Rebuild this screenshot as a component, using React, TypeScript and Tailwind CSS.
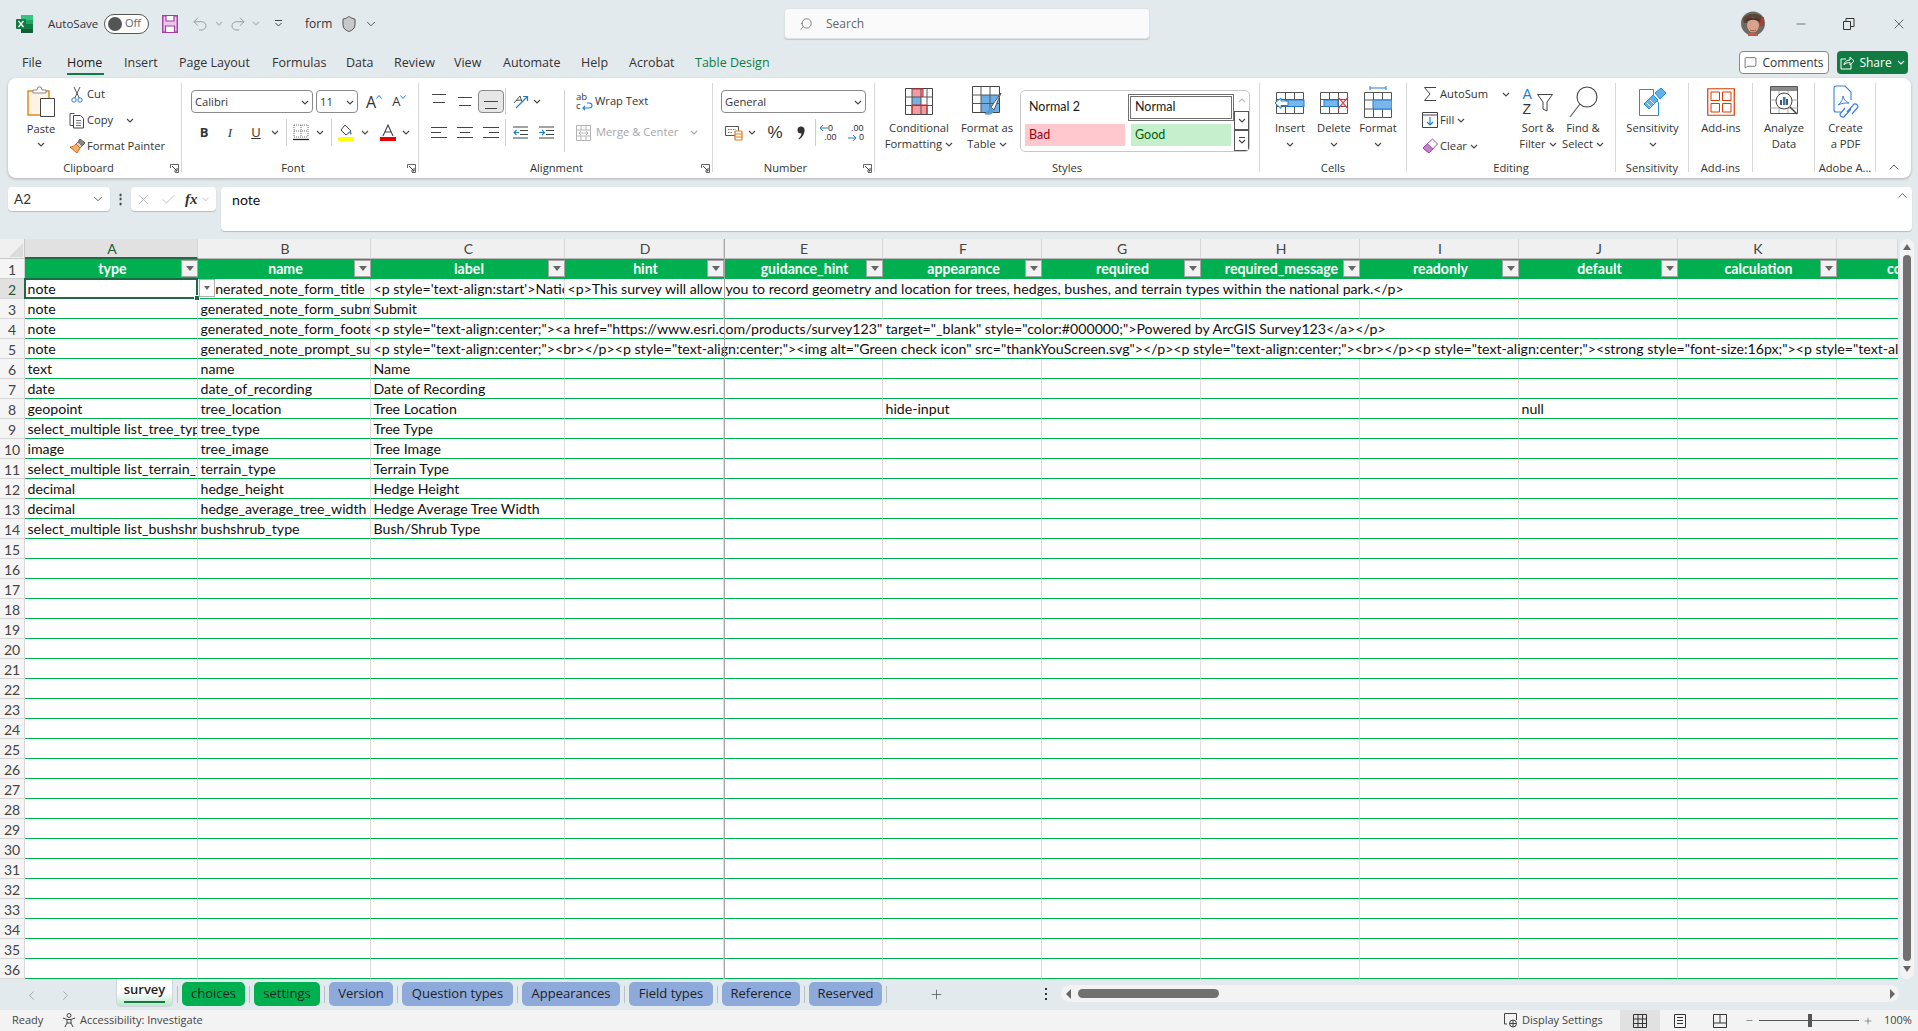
import React from 'react';
import { Search, X, Check, Minus, MessageSquare, Undo2, Redo2, Shield, ChevronDown, ChevronUp, ChevronLeft, ChevronRight, Plus } from 'lucide-react';

const ui = "font-['Open_Sans','Noto_Sans',sans-serif]";

// small dropdown caret used all over the ribbon
const Chev = ({ className = '', color = '#444' }: { className?: string; color?: string }) => (
  <svg width="8" height="5" viewBox="0 0 8 5" fill="none" className={`shrink-0 ${className}`}>
    <path d="M1 1l3 3 3-3" stroke={color} strokeWidth="1.1" />
  </svg>
);

const Ico = ({ w, h, children, className = '' }: { w: number; h: number; children: React.ReactNode; className?: string }) => (
  <svg width={w} height={h} viewBox={`0 0 ${w} ${h}`} fill="none" className={`shrink-0 ${className}`}>
    {children}
  </svg>
);

const Launcher = () => (
  <Ico w={9} h={9} className="absolute right-[2px] top-[6px]">
    <path d="M.5 4V.5H8.500V8.500H5" stroke="#666" />
    <path d="M2 2l5 5M7 4v3H4" stroke="#444" />
  </Ico>
);

const Group = ({ width, label, launcher, last, labelClass = '', children }: { width: string; label?: string; launcher?: boolean; last?: boolean; labelClass?: string; children: React.ReactNode }) => (
  <div className={`${width} h-[89px] shrink-0 flex flex-col ${last ? '' : 'border-r border-[#d8d8d8]'}`}>
    <div className="h-[75px] shrink-0 flex">{children}</div>
    <div className={`relative h-[20px] shrink-0 flex items-center justify-center text-[11.2px] text-[#333] whitespace-nowrap ${labelClass}`}>
      {label}
      {launcher && <Launcher />}
    </div>
  </div>
);

const Large = ({ width, icon, lines, chevLine, noChev }: { width: string; icon: React.ReactNode; lines: string[]; chevLine?: boolean; noChev?: boolean }) => (
  <div className={`${width} shrink-0 flex flex-col items-center text-[11.2px] leading-[16px] text-[#333]`}>
    <div className="h-[37px] flex items-center justify-center">{icon}</div>
    {lines.map((l, i) => (
      <div key={l} className="h-[16px] flex items-center gap-[3px] whitespace-nowrap">
        {l}
        {chevLine && i === lines.length - 1 && <Chev />}
      </div>
    ))}
    {!chevLine && !noChev && lines.length === 1 && (
      <div className="h-[16px] flex items-center">
        <Chev />
      </div>
    )}
  </div>
);

const Small = ({ icon, label, chev }: { icon: React.ReactNode; label: string; chev?: string }) => (
  <div className="h-[22px] flex items-center text-[11.2px] whitespace-nowrap text-[#333]">
    <div className="w-[20px] flex justify-center">{icon}</div>
    <span>{label}</span>
    {chev && <Chev className={chev} />}
  </div>
);

const Sep = ({ className = '' }: { className?: string }) => <div className={`w-px h-[27px] bg-[#d0d0d0] shrink-0 ${className}`} />;

const Lines = ({ rows }: { rows: [number, number][] }) => (
  <Ico w={16} h={13}>
    {rows.map(([x, l], i) => (
      <path key={i} d={`M${x} ${1.5 + i * 5}h${l}`} stroke="#444" />
    ))}
  </Ico>
);

// vertical alignment glyph, two lines at given heights in a 23px tall button
const AlignV = ({ a, b }: { a: number; b: number }) => (
  <Ico w={16} h={23}>
    <path d={`M1 ${a}h14M2 ${b}h12`} stroke="#444" />
  </Ico>
);

const Cell26 = ({ children, className = '' }: { children: React.ReactNode; className?: string }) => (
  <div className={`w-[26px] h-[23px] flex items-center justify-center shrink-0 ${className}`}>{children}</div>
);

// ---- ribbon drawings

const PasteIcon = () => (
  <Ico w={30} h={31}>
    <path d="M2 5h21v24H2z" fill="#fff4e6" stroke="#e08a1e" strokeWidth="1.500" />
    <path d="M7 7V4h4l1-3h3l1 3h4v3z" fill="#fff" stroke="#8a8a8a" />
    <path d="M14.500 12.500h14v18h-14z" fill="#fff" stroke="#444" />
  </Ico>
);
const ScissorIcon = () => (
  <Ico w={12} h={17}>
    <circle cx="3" cy="14" r="2.200" stroke="#2b7cd3" />
    <circle cx="9" cy="14" r="2.200" stroke="#2b7cd3" />
    <path d="M3.800 12L9 1M8.200 12L3 1" stroke="#555" />
  </Ico>
);
const CopyIcon = () => (
  <Ico w={16} h={17}>
    <path d="M5.500 1.500H1v12h3" stroke="#555" />
    <path d="M4.500 3.500h7l3 3v9.500h-10z" fill="#fff" stroke="#444" />
    <path d="M7 8.500h5M7 11h5M7 13.500h5" stroke="#777" />
  </Ico>
);
const PainterIcon = () => (
  <Ico w={17} h={16}>
    <path d="M11 1l5 4-3 3-4-4z" fill="#888" stroke="#555" />
    <path d="M9 4l4 4-2 2-4-4z" fill="#d6d6d6" stroke="#777" />
    <path d="M7 6l4 4-3 5-7-6c3 0 4-1 6-3z" fill="#f3b071" stroke="#d2691e" />
  </Ico>
);
const BorderIcon = () => (
  <Ico w={16} h={17}>
    <path d="M1 1h14M1 7h14M1 13h14M1 1v12M8 1v12M15 1v12" stroke="#777" strokeDasharray="1 1" />
    <path d="M0 15.500h16" stroke="#222" strokeWidth="1.300" />
  </Ico>
);
const FillIcon = () => (
  <Ico w={16} h={17}>
    <path d="M7 1l6 6-5 4-5-5z" fill="#fff" stroke="#444" />
    <path d="M12 6c1 2 2 3 1.500 4s-2 .5-1.500-1z" fill="#2d7fd3" />
    <rect y="13" width="16" height="4" fill="#ffff00" />
  </Ico>
);
const FontColorIcon = () => (
  <Ico w={16} h={17}>
    <path d="M3 12L8 1l5 11M5 8h6" stroke="#444" strokeWidth="1.100" />
    <rect y="13" width="16" height="4" fill="#f00000" />
  </Ico>
);
const OrientIcon = () => (
  <Ico w={17} h={16}>
    <path d="M1 9l6-7 2 6M3 6.500l5-.5" stroke="#555" />
    <path d="M3 14L14 3M10 2.500h4.500V7" stroke="#1f7fcf" strokeWidth="1.200" />
  </Ico>
);
const IndentL = () => (
  <Ico w={15} h={13}>
    <path d="M0 1h15M7 4.500h8M7 8.500h8M0 12h15" stroke="#444" />
    <path d="M6 6.500H1M3.500 4L1 6.500 3.500 9" stroke="#1f7fcf" strokeWidth="1.100" />
  </Ico>
);
const IndentR = () => (
  <Ico w={15} h={13}>
    <path d="M0 1h15M7 4.500h8M7 8.500h8M0 12h15" stroke="#444" />
    <path d="M0 6.500h5M3 4l2.500 2.500L3 9" stroke="#1f7fcf" strokeWidth="1.100" />
  </Ico>
);
const WrapIcon = () => (
  <div className="relative w-[18px] h-[20px] shrink-0 text-[9.500px] leading-[10px] text-[#333]">
    <span className="absolute left-0 top-0">ab</span>
    <span className="absolute left-0 top-[9px]">c</span>
    <svg width="12" height="10" viewBox="0 0 12 10" fill="none" className="absolute left-[6px] top-[9px]">
      <path d="M1 7h6c4 0 4-5 0-5H5M3 5L1 7l2 2" stroke="#1f7fcf" strokeWidth="1.100" />
    </svg>
  </div>
);
const MergeIcon = () => (
  <Ico w={15} h={16}>
    <path d="M.5.5h14v15H.5zM.5 5h14M.5 11h14M5 .5V5M10 .5V5M5 11v4.500M10 11v4.500" stroke="#b5b5b5" />
    <path d="M3 8h9M5 6L3 8l2 2M10 6l2 2-2 2" stroke="#b5b5b5" />
  </Ico>
);
const AccountingIcon = () => (
  <Ico w={18} h={17}>
    <path d="M.5 2.500h13v9H.5z" fill="#fff" stroke="#555" />
    <path d="M3 5.500h8M3 8.500h5" stroke="#777" strokeDasharray="1.500 1" />
    <rect x="10" y="7" width="7" height="9" rx="1" fill="#fff" stroke="#e07b1a" strokeWidth="1.200" />
    <path d="M10 10h7M10 13h7" stroke="#e07b1a" />
  </Ico>
);
const CommaIcon = () => (
  <Ico w={10} h={14}>
    <circle cx="5" cy="4" r="3.500" fill="#333" />
    <path d="M8.500 4c0 4-2 7.500-5.500 9.500l-.6-.8C4.500 11 5.500 9 5.500 7z" fill="#333" />
  </Ico>
);
const DecIcon = ({ more }: { more?: boolean }) => (
  <div className="relative w-[18px] h-[20px] shrink-0 font-['Liberation_Sans',sans-serif] text-[9px] leading-[9px] text-[#333]">
    <span className={`absolute top-[1px] ${more ? 'left-[3px]' : 'left-[9px]'}`}>{more ? '.00' : '0'}</span>
    <span className={`absolute top-[10px] ${more ? 'left-[11px]' : 'left-[5px]'}`}>{more ? '0' : '.00'}</span>
    <svg width="9" height="8" viewBox="0 0 9 8" fill="none" className={`absolute ${more ? 'left-0 top-[11px]' : 'left-0 top-[1px]'}`}>
      {more ? <path d="M0 4h8M5 1l3 3-3 3" stroke="#1f7fcf" /> : <path d="M9 4H1M4 1L1 4l3 3" stroke="#1f7fcf" />}
    </svg>
  </div>
);
const CondIcon = () => (
  <Ico w={28} h={27}>
    <path d="M.5 .5h27v26H.5z" fill="#fff" stroke="#444" />
    <rect x="7" y="1" width="11" height="8" fill="#f59aa0" />
    <rect x="7" y="9" width="9" height="8" fill="#73b2e6" />
    <rect x="7" y="17" width="15" height="9" fill="#f59aa0" />
    <path d="M7 .5v26M16 .5v26M22 .5v26M.5 9h27M.5 17.500h27" stroke="#555" />
    <path d="M7 1h11v8M7 26V17h15v9" stroke="#d3222a" />
  </Ico>
);
const TableIcon = () => (
  <Ico w={30} h={32}>
    <path d="M.5 .5h27v26H.5z" fill="#fff" stroke="#444" />
    <rect x="9" y="9" width="18" height="17" fill="#6eaee6" />
    <path d="M9 .5v26M18 .5v26M.5 9h27M.5 17.500h27" stroke="#555" />
    <path d="M29 7L19 21l3 3z" fill="#fff" stroke="#555" />
    <path d="M19 21c-3 1-2 4-7 7 5 2 10 0 10-4z" fill="#5b9bd5" />
  </Ico>
);
const CellsBase = ({ children }: { children: React.ReactNode }) => (
  <Ico w={30} h={27}>
    <path d="M1.500 4.500h27v21h-27zM1.500 11.500h27M1.500 18.500h27M10.500 4.500v21M19.500 4.500v21" stroke="#555" />
    {children}
  </Ico>
);
const InsertIcon = () => (
  <CellsBase>
    <rect x="10" y="12" width="19" height="6.500" fill="#7ab6ea" stroke="#1f7fcf" />
    <path d="M0 15l6-5v3h7v4.500H6v3z" fill="#fff" stroke="#1f7fcf" />
  </CellsBase>
);
const DeleteIcon = () => (
  <CellsBase>
    <rect x="5" y="12" width="14" height="6.500" fill="#7ab6ea" stroke="#1f7fcf" />
    <path d="M19 9l10 12M29 9L19 21" stroke="#e8474c" strokeWidth="1.200" />
  </CellsBase>
);
const FormatIcon = () => (
  <Ico w={28} h={32}>
    <path d="M6 2h16M6 0v4M22 0v4" stroke="#1f7fcf" />
    <path d="M.5 6.500h27v25H.500zM.5 14h27M.5 23h27M9.500 6.500v25M18.500 6.500v25" stroke="#555" />
    <rect x="9" y="14" width="19" height="9" fill="#7ab6ea" />
    <path d="M9 14h19v9H9z" stroke="#1f7fcf" />
  </Ico>
);
const FillDownIcon = () => (
  <Ico w={16} h={16}>
    <path d="M.5 .5h15v15H.5zM.5 3h15" fill="#fff" stroke="#444" />
    <path d="M8 5v8M5 10l3 3 3-3" stroke="#1f7fcf" strokeWidth="1.200" />
  </Ico>
);
const ClearIcon = () => (
  <Ico w={16} h={16}>
    <path d="M10.500 1l5 5L7 15l-6-5z" fill="#fff" stroke="#a347b0" />
    <path d="M5.500 6l5.500 5-4 4-6-5z" fill="#c77fd0" stroke="#a347b0" />
  </Ico>
);
const SortIcon = () => (
  <div className="relative w-[31px] h-[30px] font-['Liberation_Sans',sans-serif] text-[14px] leading-[14px]">
    <span className="absolute left-0 top-0 text-[#1f7fcf]">A</span>
    <span className="absolute left-0 top-[15px] text-[#333]">Z</span>
    <svg width="16" height="18" viewBox="0 0 16 18" fill="none" className="absolute left-[14px] top-[7px]">
      <path d="M.5.500h15L10 8v9l-4-2V8z" fill="#fff" stroke="#444" />
    </svg>
  </div>
);
const FindIcon = () => (
  <Ico w={29} h={32}>
    <circle cx="18" cy="11" r="10" fill="#fff" stroke="#444" strokeWidth="1.100" />
    <path d="M11 18L1 31" stroke="#555" strokeWidth="1.100" />
  </Ico>
);
const SensitivityIcon = () => (
  <Ico w={28} h={29}>
    <path d="M.5 2.500h14v8l5 5v13H.5z" fill="#fff" stroke="#1f8fdc" />
    <path d="M5 17l9-9 5 5-9 9z" fill="#5fb2ea" stroke="#1f8fdc" />
    <path d="M16 6l6-5 5 5-6 6z" fill="#5fb2ea" stroke="#1f8fdc" />
    <path d="M8 16l5 5M11 13l5 5" stroke="#fff" />
  </Ico>
);
const AddInsIcon = () => (
  <Ico w={28} h={28}>
    <path d="M.75.75h26.500v26.500H.75z" stroke="#d83b01" strokeWidth="1.200" />
    <path d="M4 4h8.500v8.500H4zM15.500 4H24v8.500h-8.500zM4 15.500h8.500V24H4zM15.500 15.500H24V24h-8.500z" stroke="#d83b01" />
  </Ico>
);
const AnalyzeIcon = () => (
  <Ico w={28} h={32}>
    <path d="M.5.5h27v27H.5z" fill="#fff" stroke="#555" />
    <rect x="1" y="1" width="26" height="4" fill="#8a8a8a" />
    <path d="M9 5v22M18 5v22M.5 14h27M.5 22h27" stroke="#aaa" />
    <circle cx="14" cy="15" r="8" fill="#fff" stroke="#444" />
    <rect x="10" y="14" width="2" height="5" fill="#555" />
    <rect x="13" y="11" width="2.500" height="8" fill="#1f7fcf" />
    <rect x="16" y="13" width="2" height="6" fill="#555" />
    <path d="M20 21l7 7" stroke="#444" strokeWidth="1.400" />
  </Ico>
);
const PdfIcon = () => (
  <Ico w={26} h={34}>
    <path d="M1 3a2 2 0 012-2h9l6 6v8M1 3v22a2 2 0 002 2h5" stroke="#3a7fe0" strokeWidth="1.100" />
    <path d="M5 20c3-2 5-6 5-9 1 4 3 6 6 7-4 0-7 0-11 2z" stroke="#3a7fe0" />
    <path d="M14 27l7-8a3 3 0 014 3l-6 7M18 24l-7 8a3 3 0 01-4-3l5-6" stroke="#3a7fe0" strokeWidth="1.200" />
  </Ico>
);
const ShareIcon = () => (
  <Ico w={14} h={14}>
    <path d="M6 3H1v10h10V8" stroke="#fff" />
    <path d="M4 9c0-3 3-5 6-5V1l4 4-4 4V6.500C8 6.500 5 7 4 9z" stroke="#fff" />
  </Ico>
);
const Avatar = () => (
  <Ico w={24} h={25}>
    <circle cx="12" cy="12.500" r="12" fill="#6a6a62" />
    <path d="M2 8c3-6 17-7 20 0l-1 4H3z" fill="#5c4237" />
    <path d="M20 6h3v9h-4z" fill="#b43a30" />
    <ellipse cx="12" cy="14" rx="6" ry="7.500" fill="#d9a28a" />
    <path d="M6 10c2-3 10-3 12 0" stroke="#4a3228" strokeWidth="2" />
    <path d="M9 19c2 1 4 1 6 0" stroke="#a0503c" />
    <path d="M7 23c2-2 8-2 10 0v2H7z" fill="#c9584a" />
  </Ico>
);
const ExcelLogo = () => (
  <Ico w={17} h={18}>
    <path d="M5 0h11a1 1 0 011 1v16a1 1 0 01-1 1H5z" fill="#21a366" />
    <path d="M5 0h12v5H5z" fill="#33c481" />
    <path d="M5 9h12v5H5z" fill="#107c41" />
    <path d="M5 14h12v3a1 1 0 01-1 1H5z" fill="#185c37" />
    <rect x="0" y="4" width="10" height="10" rx="1" fill="#107c41" />
    <path d="M2.500 6l5 6M7.500 6l-5 6" stroke="#fff" strokeWidth="1.300" />
  </Ico>
);
const SaveIcon = () => (
  <Ico w={16} h={18}>
    <path d="M.75.75h14.500v16.500H.75z" fill="#edc6ed" stroke="#a33ea1" strokeWidth="1.400" />
    <path d="M4 1v5h8V1M3.500 17v-6h9v6" stroke="#a33ea1" strokeWidth="1.200" fill="#fff" />
  </Ico>
);

// ---- sheet data

const colLetters = ['A', 'B', 'C', 'D', 'E', 'F', 'G', 'H', 'I', 'J', 'K', ''];
const headers = ['type', 'name', 'label', 'hint', 'guidance_hint', 'appearance', 'required', 'required_message', 'readonly', 'default', 'calculation'];
const colSpanClass: Record<number, string> = { 1: 'col-span-1', 6: 'col-span-6', 7: 'col-span-7', 10: 'col-span-10' };

type C = { t?: string; span?: number };
const rowData: C[][] = [
  [{ t: 'note' }, { t: 'generated_note_form_title' }, { t: "<p style='text-align:start'>National Park Survey</p>" }, { t: '<p>This survey will allow you to record geometry and location for trees, hedges, bushes, and terrain types within the national park.</p>', span: 6 }, {}, {}, {}],
  [{ t: 'note' }, { t: 'generated_note_form_submit' }, { t: 'Submit' }, {}, {}, {}, {}, {}, {}, {}, {}, {}],
  [{ t: 'note' }, { t: 'generated_note_form_footer' }, { t: '<p style="text-align:center;"><a href="https://www.esri.com/products/survey123" target="_blank" style="color:#000000;">Powered by ArcGIS Survey123</a></p>', span: 7 }, {}, {}, {}],
  [{ t: 'note' }, { t: 'generated_note_prompt_submit' }, { t: '<p style="text-align:center;"><br></p><p style="text-align:center;"><img alt="Green check icon" src="thankYouScreen.svg"></p><p style="text-align:center;"><br></p><p style="text-align:center;"><strong style="font-size:16px;"><p style="text-align:center;">Thanks</p></strong></p>', span: 10 }],
  [{ t: 'text' }, { t: 'name' }, { t: 'Name' }, {}, {}, {}, {}, {}, {}, {}, {}, {}],
  [{ t: 'date' }, { t: 'date_of_recording' }, { t: 'Date of Recording' }, {}, {}, {}, {}, {}, {}, {}, {}, {}],
  [{ t: 'geopoint' }, { t: 'tree_location' }, { t: 'Tree Location' }, {}, {}, { t: 'hide-input' }, {}, {}, {}, { t: 'null' }, {}, {}],
  [{ t: 'select_multiple list_tree_type' }, { t: 'tree_type' }, { t: 'Tree Type' }, {}, {}, {}, {}, {}, {}, {}, {}, {}],
  [{ t: 'image' }, { t: 'tree_image' }, { t: 'Tree Image' }, {}, {}, {}, {}, {}, {}, {}, {}, {}],
  [{ t: 'select_multiple list_terrain_type' }, { t: 'terrain_type' }, { t: 'Terrain Type' }, {}, {}, {}, {}, {}, {}, {}, {}, {}],
  [{ t: 'decimal' }, { t: 'hedge_height' }, { t: 'Hedge Height' }, {}, {}, {}, {}, {}, {}, {}, {}, {}],
  [{ t: 'decimal' }, { t: 'hedge_average_tree_width' }, { t: 'Hedge Average Tree Width' }, {}, {}, {}, {}, {}, {}, {}, {}, {}],
  [{ t: 'select_multiple list_bushshrub_type' }, { t: 'bushshrub_type' }, { t: 'Bush/Shrub Type' }, {}, {}, {}, {}, {}, {}, {}, {}, {}],
];
const allRows: C[][] = [...rowData, ...Array.from({ length: 22 }, () => Array.from({ length: 12 }, () => ({} as C)))];

const menuTabs = [
  ['File', 'w-[45px]'], ['Home', 'w-[57px]'], ['Insert', 'w-[55px]'], ['Page Layout', 'w-[93px]'], ['Formulas', 'w-[74px]'], ['Data', 'w-[48px]'],
  ['Review', 'w-[60px]'], ['View', 'w-[49px]'], ['Automate', 'w-[78px]'], ['Help', 'w-[48px]'], ['Acrobat', 'w-[66px]'], ['Table Design', 'w-[90px]'],
];

const sheetTabs = [
  ['choices', 'w-[63px]', 'bg-[#00b050]'], ['settings', 'w-[66px]', 'bg-[#00b050]'], ['Version', 'w-[64px]', 'bg-[#8eaadb]'], ['Question types', 'w-[111px]', 'bg-[#8eaadb]'],
  ['Appearances', 'w-[98px]', 'bg-[#8eaadb]'], ['Field types', 'w-[84px]', 'bg-[#8eaadb]'], ['Reference', 'w-[78px]', 'bg-[#8eaadb]'], ['Reserved', 'w-[73px]', 'bg-[#8eaadb]'],
];

const FilterBtn = () => (
  <div className="absolute right-0 top-[1px] w-[17px] h-[17px] bg-[#f2f2f2] border border-[#a6a6a6] flex items-center justify-center">
    <div className="w-0 h-0 border-l-[4px] border-r-[4px] border-t-[5px] border-l-transparent border-r-transparent border-t-[#666]" />
  </div>
);

const Sheet = () => (
  <div className="relative grid grid-cols-[25px_173px_173px_194px_159px_159px_159px_159px_159px_159px_159px_159px_61px] auto-rows-[20px] w-[1898px] bg-white font-['Lato',sans-serif] text-[14.15px] text-[#111]">
    {/* corner + column letters */}
    <div className="bg-[#f0f0f0] border-b border-r border-[#c8c8c8] relative overflow-hidden">
      <div className="absolute right-[1px] bottom-[1px] w-0 h-0 border-l-[14px] border-b-[14px] border-l-transparent border-b-[#dcdcdc]" />
    </div>
    {colLetters.map((l, i) => (
      <div key={i} className={`flex items-center justify-center pl-[2px] text-[14px] border-r border-[#d6d6d6] ${i === 0 ? 'bg-[#e1e1e1] border-b-2 border-b-[#1d6b42] text-[#1d5c38]' : 'bg-[#f0f0f0] border-b border-b-[#b8b8b8] text-[#444]'}`}>
        {l}
      </div>
    ))}

    {/* row 1, table header */}
    <div className="bg-[#f5f5f5] border-b border-r border-[#d0d0d0] flex items-center justify-center pt-[1px] text-[14px] text-[#444]">1</div>
    {headers.map((h) => (
      <div key={h} className="relative bg-[#00b050] flex items-center justify-center pl-[2px] font-bold text-white whitespace-nowrap overflow-hidden">
        {h}
        <FilterBtn />
      </div>
    ))}
    <div className="bg-[#00b050] font-bold text-white whitespace-nowrap overflow-hidden flex items-center pl-[50px]">constraint</div>

    {allRows.map((cells, r) => (
      <React.Fragment key={r}>
        <div className={`border-b border-r border-[#d8d8d8] flex items-center justify-center pt-[1px] text-[14px] ${r === 0 ? 'bg-[#e1e1e1] text-[#1d5c38]' : 'bg-[#f5f5f5] text-[#444]'}`}>{r + 2}</div>
        {cells.map((c, i) => (
          <div
            key={i}
            className={`border-b border-b-[#00b050] flex items-center px-[2.500px] pt-[1px] whitespace-nowrap ${colSpanClass[c.span ?? 1]} ${i < cells.length - 1 ? 'border-r border-r-[#dcdcdc]' : ''} ${r === 0 && i === 0 ? 'relative z-10' : 'overflow-hidden'}`}
          >
            {c.t}
            {r === 0 && i === 0 && (
              <>
                <div className="absolute -left-px -top-px -right-px -bottom-px border-2 border-[#1d6b42]" />
                <div className="absolute -right-[3px] -bottom-[3px] w-[6px] h-[6px] bg-[#1d6b42] border border-white" />
                <div className="absolute left-full top-0 ml-[2px] w-[16px] h-[18px] bg-[#fdfdfd] border border-[#b0b0b0] flex items-center justify-center">
                  <div className="w-0 h-0 border-l-[3.500px] border-r-[3.500px] border-t-[4px] border-l-transparent border-r-transparent border-t-[#666]" />
                </div>
              </>
            )}
          </div>
        ))}
      </React.Fragment>
    ))}

    {/* freeze pane line */}
    <div className="absolute left-[724px] top-0 bottom-0 w-px bg-[#a8a8a8]" />
  </div>
);

const App = () => (
  <div className={`w-[1918px] h-[1031px] overflow-hidden flex flex-col bg-[#e3eaee] text-[#333] ${ui}`}>
    {/* title bar */}
    <div className="h-[47px] shrink-0 flex items-center text-[12px]">
      <div className="ml-[16px]"><ExcelLogo /></div>
      <span className="ml-[15px] w-[56px] text-[11.500px]">AutoSave</span>
      <div className="w-[45px] h-[20px] rounded-full border border-[#555] bg-white flex items-center pl-[3px] gap-[3px] text-[11px] text-[#666]">
        <div className="w-[14px] h-[14px] rounded-full bg-[#555]" />
        Off
      </div>
      <div className="ml-[13px]"><SaveIcon /></div>
      <Undo2 size={18} strokeWidth={1.3} color="#9a9a9a" className="ml-[13px]" />
      <Chev className="ml-[6px]" color="#b5b5b5" />
      <Redo2 size={18} strokeWidth={1.3} color="#9a9a9a" className="ml-[6px]" />
      <Chev className="ml-[5px]" color="#b5b5b5" />
      <Ico w={9} h={8} className="ml-[14px]"><path d="M1 .5h7M1.500 3l3 3 3-3" stroke="#444" /></Ico>
      <span className="ml-[22px] w-[35px] text-[12px]">form</span>
      <Shield size={18} strokeWidth={1.2} color="#444" fill="#c8c8c8" />
      <ChevronDown size={14} strokeWidth={1.4} className="ml-[6px]" color="#333" />
      <div className="ml-[406px] w-[366px] h-[31px] rounded-[4px] bg-[#fafafa] border border-[#dde2e5] shadow-[0_1px_1px_rgba(0,0,0,0.15)] flex items-center pl-[14px] gap-[13px] text-[12px] text-[#666]">
        <Search size={14} strokeWidth={1.2} color="#555" className="-scale-x-100" />
        Search
      </div>
      <div className="ml-[591px]"><Avatar /></div>
      <Minus size={14} strokeWidth={1.1} color="#333" className="ml-[29px]" />
      <Ico w={12} h={12} className="ml-[35px]"><path d="M.5 3.500h7v8h-7zM3 3.500V.5h8v8H7.500" stroke="#333" /></Ico>
      <X size={16} strokeWidth={1.1} color="#333" className="ml-[36px]" />
    </div>

    {/* menu tabs */}
    <div className="h-[31px] shrink-0 flex items-center pl-[22px] text-[12.5px] text-[#333]">
      {menuTabs.map(([name, w]) => (
        <div key={name} className={`${w} relative shrink-0 whitespace-nowrap pt-[2px] ${name === 'Table Design' ? 'text-[#107c41]' : ''} ${name === 'Home' ? 'text-[#222]' : ''}`}>
          {name}
          {name === 'Home' && <div className="absolute left-0 -bottom-[2px] w-[37px] h-[2px] bg-[#107c41]" />}
        </div>
      ))}
      <div className="ml-auto flex items-center mr-[10px] gap-[8px]">
        <div className="w-[90px] h-[23px] bg-white border border-[#888] rounded-[4px] flex items-center justify-center gap-[5px] text-[12px]">
          <MessageSquare size={13} strokeWidth={1.2} />
          Comments
        </div>
        <div className="w-[71px] h-[23px] bg-[#107c41] rounded-[4px] flex items-center justify-center gap-[5px] text-[12px] text-white">
          <ShareIcon />
          Share
          <Chev color="#fff" />
        </div>
      </div>
    </div>

    {/* ribbon */}
    <div className="h-[100px] shrink-0 ml-[8px] w-[1903px] rounded-[8px] bg-white shadow-[0_1px_3px_rgba(0,0,0,0.25)] flex pt-[5px] relative">
      <Group width="w-[174px]" label="Clipboard" launcher labelClass="pr-[12px]">
        <div className="w-[53px] pl-[13px] shrink-0 flex flex-col items-center text-[11.2px] pt-[3px]">
          <PasteIcon />
          <div className="mt-[4px] leading-[16px]">Paste</div>
          <Chev className="mt-[5px]" />
        </div>
        <div className="flex flex-col gap-[4px] ml-[6px]">
          <Small icon={<ScissorIcon />} label="Cut" />
          <Small icon={<CopyIcon />} label="Copy" chev="ml-[13px]" />
          <Small icon={<PainterIcon />} label="Format Painter" />
        </div>
      </Group>

      <Group width="w-[237px]" label="Font" launcher labelClass="pr-[14px]">
        <div className="pl-[9px] pt-[7px] flex flex-col gap-[8px]">
          <div className="flex items-center h-[23px]">
            <div className="w-[122px] h-[23px] border border-[#8a8a8a] rounded-[4px] flex items-center justify-between px-[3px] pt-[1px] text-[11.2px]">
              Calibri
              <Chev />
            </div>
            <div className="w-[42px] h-[23px] ml-[3px] border border-[#8a8a8a] rounded-[4px] flex items-center justify-between px-[3px] pt-[1px] text-[11.2px]">
              11
              <Chev />
            </div>
            <span className="ml-[8px] text-[16px] leading-[16px]">A</span>
            <Ico w={6} h={4} className="-mt-[10px]"><path d="M.5 3.500l2.500-3 2.500 3" stroke="#1f7fcf" /></Ico>
            <span className="ml-[10px] text-[13px] leading-[13px]">A</span>
            <Ico w={6} h={4} className="-mt-[10px]"><path d="M.5.5l2.500 3 2.500-3" stroke="#1f7fcf" /></Ico>
          </div>
          <div className="flex items-center h-[23px]">
            <Cell26><span className="font-bold text-[13px]">B</span></Cell26>
            <Cell26><span className="italic text-[13px] font-['Liberation_Serif',serif]">I</span></Cell26>
            <Cell26><span className="underline text-[13px]">U</span></Cell26>
            <Chev className="ml-[2px]" />
            <Sep className="ml-[7px]" />
            <div className="ml-[6px]"><BorderIcon /></div>
            <Chev className="ml-[7px]" />
            <Sep className="ml-[7px]" />
            <div className="ml-[6px]"><FillIcon /></div>
            <Chev className="ml-[7px]" />
            <div className="ml-[11px]"><FontColorIcon /></div>
            <Chev className="ml-[6px]" />
          </div>
        </div>
      </Group>

      <Group width="w-[294px]" label="Alignment" launcher labelClass="pr-[18px]">
        <div className="pl-[7px] pt-[7px] flex">
          <div className="w-[138px] flex flex-col gap-[8px]">
            <div className="flex items-center h-[23px]">
              <Cell26><AlignV a={4.5} b={12.5} /></Cell26>
              <Cell26><AlignV a={7.5} b={15.5} /></Cell26>
              <Cell26 className="bg-[#e6e6e6] border border-[#8a8a8a] rounded-[4px]"><AlignV a={11.5} b={18.5} /></Cell26>
              <Sep className="ml-[1px]" />
              <div className="ml-[7px]"><OrientIcon /></div>
              <Chev className="ml-[3px]" />
            </div>
            <div className="flex items-center h-[23px]">
              <Cell26><Lines rows={[[0, 16], [0, 10], [0, 16]]} /></Cell26>
              <Cell26><Lines rows={[[0, 16], [3, 10], [0, 16]]} /></Cell26>
              <Cell26><Lines rows={[[0, 16], [6, 10], [0, 16]]} /></Cell26>
              <Sep className="ml-[1px]" />
              <Cell26 className="ml-[1px]"><IndentL /></Cell26>
              <Cell26><IndentR /></Cell26>
            </div>
          </div>
          <div className="w-px h-[62px] bg-[#d0d0d0]" />
          <div className="pl-[11px] flex flex-col gap-[8px]">
            <div className="h-[23px] flex items-center gap-[1px] text-[11.2px]"><WrapIcon /><span>Wrap Text</span></div>
            <div className="h-[23px] flex items-center text-[11.2px] text-[#a6a6a6]">
              <MergeIcon />
              <span className="ml-[5px]">Merge &amp; Center</span>
              <Chev className="ml-[12px]" color="#a6a6a6" />
            </div>
          </div>
        </div>
      </Group>

      <Group width="w-[162px]" label="Number" launcher labelClass="pr-[16px]">
        <div className="pl-[8px] pt-[7px] flex flex-col gap-[8px]">
          <div className="w-[145px] h-[23px] border border-[#8a8a8a] rounded-[4px] flex items-center justify-between px-[3px] pt-[1px] text-[11.2px]">
            General
            <Chev />
          </div>
          <div className="h-[23px] flex items-center">
            <div className="ml-[4px]"><AccountingIcon /></div>
            <Chev className="ml-[5px]" />
            <span className="ml-[7px] w-[24px] text-[17px] leading-[17px] text-center font-['Liberation_Sans',sans-serif]">%</span>
            <div className="ml-[5px] w-[18px] flex justify-center"><CommaIcon /></div>
            <Sep className="ml-[5px]" />
            <div className="ml-[3px]"><DecIcon /></div>
            <div className="ml-[11px]"><DecIcon more /></div>
          </div>
        </div>
      </Group>

      <Group width="w-[385px]" label="Styles">
        <div className="pl-[9px] flex">
          <Large width="w-[70px]" icon={<CondIcon />} lines={['Conditional', 'Formatting']} chevLine />
          <Large width="w-[66px]" icon={<TableIcon />} lines={['Format as', 'Table']} chevLine />
          <div className="mt-[7px] w-[230px] h-[62px] border border-[#c8c8c8] rounded-[5px] flex text-[12.500px] overflow-hidden">
            <div className="w-[214px] pl-[4px] pt-[3px] grid grid-cols-[100px_100px] grid-rows-[27px_22px] gap-x-[6px] gap-y-[3px] font-['Lato',sans-serif]">
              <div className="flex items-center pl-[4px] text-[#1a1a1a]">Normal 2</div>
              <div className="-mx-[3px] border-[3px] border-double border-[#707070] flex items-center pl-[4px] text-[#1a1a1a]">Normal</div>
              <div className="bg-[#ffc7ce] text-[#9c0006] flex items-center pl-[4px]">Bad</div>
              <div className="bg-[#c6efce] text-[#006100] flex items-center pl-[4px]">Good</div>
            </div>
            <div className="w-[15px] ml-auto flex flex-col">
              <div className="h-[20px] flex items-center justify-center"><Chev color="#bbb" className="rotate-180" /></div>
              <div className="h-[20px] border border-[#555] flex items-center justify-center"><Chev /></div>
              <div className="h-[21px] border border-[#555] flex flex-col items-center justify-center gap-[1px]"><div className="w-[6px] h-px bg-[#444]" /><Chev /></div>
            </div>
          </div>
        </div>
      </Group>

      <Group width="w-[147px]" label="Cells">
        <div className="pl-[8px] flex">
          <Large width="w-[44px]" icon={<InsertIcon />} lines={['Insert']} />
          <Large width="w-[44px]" icon={<DeleteIcon />} lines={['Delete']} />
          <Large width="w-[44px]" icon={<FormatIcon />} lines={['Format']} />
        </div>
      </Group>

      <Group width="w-[209px]" label="Editing">
        <div className="pl-[13px] flex">
          <div className="w-[96px] flex flex-col gap-[4px]">
            <Small icon={<Ico w={14} h={16}><path d="M13 1.500H1.500L7 8l-5.500 6.500H13" stroke="#444" /></Ico>} label="AutoSum" chev="ml-[14px]" />
            <Small icon={<FillDownIcon />} label="Fill" chev="ml-[3px]" />
            <Small icon={<ClearIcon />} label="Clear" chev="ml-[3px]" />
          </div>
          <Large width="w-[44px]" icon={<SortIcon />} lines={['Sort &', 'Filter']} chevLine />
          <Large width="w-[46px]" icon={<FindIcon />} lines={['Find &', 'Select']} chevLine />
        </div>
      </Group>

      <Group width="w-[73px]" label="Sensitivity">
        <Large width="w-[73px]" icon={<SensitivityIcon />} lines={['Sensitivity']} />
      </Group>
      <Group width="w-[64px]" label="Add-ins">
        <Large width="w-[64px]" icon={<AddInsIcon />} lines={['Add-ins']} noChev />
      </Group>
      <Group width="w-[62px]">
        <Large width="w-[62px]" icon={<AnalyzeIcon />} lines={['Analyze', 'Data']} />
      </Group>
      <Group width="w-[61px]" label="Adobe A...">
        <Large width="w-[61px]" icon={<PdfIcon />} lines={['Create', 'a PDF']} />
      </Group>
      <ChevronUp size={16} strokeWidth={1.2} color="#333" className="absolute right-[9px] bottom-[3px]" />
    </div>

    {/* formula bar */}
    <div className="h-[44px] shrink-0 mt-[9px] ml-[8px] flex items-start text-[12.500px]">
      <div className="w-[102px] h-[24px] bg-white rounded-[4px] shadow-[0_1px_1px_rgba(0,0,0,0.2)] flex items-center justify-between pl-[6px] pr-[5px] font-['Lato',sans-serif] text-[13.500px]">
        A2
        <ChevronDown size={14} strokeWidth={1.3} />
      </div>
      <div className="w-[21px] h-[24px] flex items-center justify-center text-[#444] font-bold">⋮</div>
      <div className="w-[85px] h-[24px] bg-white rounded-[4px] shadow-[0_1px_1px_rgba(0,0,0,0.2)] flex items-center pl-[4px] gap-[8px]">
        <X size={17} strokeWidth={1} color="#aaa" />
        <Check size={17} strokeWidth={1} color="#aaa" />
        <span className="italic font-bold text-[15px] leading-[15px] font-['Liberation_Serif',serif] text-[#333]">fx</span>
        <ChevronDown size={11} strokeWidth={1.3} color="#999" className="-ml-[6px]" />
      </div>
      <div className="relative ml-[5px] w-[1691px] h-[44px] bg-white rounded-[4px] shadow-[0_1px_1px_rgba(0,0,0,0.2)] pl-[11px] pt-[2px] font-['Lato',sans-serif] text-[14.15px] text-[#111]">
        note
        <ChevronUp size={15} strokeWidth={1.2} color="#333" className="absolute right-[2px] top-[1px]" />
      </div>
    </div>

    {/* sheet + vertical scrollbar */}
    <div className="h-[740px] mt-[8px] shrink-0 flex">
      <Sheet />
      <div className="flex-1 flex flex-col items-center relative">
        <div className="absolute left-[2px] right-[4px] top-0 bottom-0 rounded-full bg-[#f3f3f3] flex flex-col items-center">
          <div className="mt-[5px] w-0 h-0 border-l-[4px] border-r-[4px] border-b-[6px] border-l-transparent border-r-transparent border-b-[#666]" />
          <div className="mt-[5px] w-[8px] h-[706px] rounded-full bg-[#707070]" />
          <div className="mt-[5px] w-0 h-0 border-l-[4px] border-r-[4px] border-t-[6px] border-l-transparent border-r-transparent border-t-[#666]" />
        </div>
      </div>
    </div>

    {/* sheet tabs */}
    <div className="h-[31px] shrink-0 flex items-start text-[13px] text-[#222]">
      <ChevronLeft size={15} strokeWidth={1.1} color="#888" className="ml-[24px] mt-[9px]" />
      <ChevronRight size={15} strokeWidth={1.1} color="#888" className="ml-[19px] mt-[9px]" />
      <div className="ml-[43px] w-[57px] h-[28px] rounded-b-[5px] border-x border-b border-[#cfd6da] bg-gradient-to-b from-white via-white to-[#b9e6cb] relative flex items-start justify-center pt-[1px] font-semibold">
        survey
        <div className="absolute left-[7px] right-[7px] bottom-[3px] h-[2px] bg-[#107c41]" />
      </div>
      <div className="flex items-start">
        {sheetTabs.map(([name, w, bg]) => (
          <div key={name} className="flex items-start">
            <div className="w-px h-[17px] mt-[7px] mx-[4px] bg-[#b8c0c4]" />
            <div className={`${w} ${bg} h-[24px] mt-[3px] rounded-[5px] flex items-center justify-center whitespace-nowrap`}>{name}</div>
          </div>
        ))}
        <div className="w-px h-[17px] mt-[7px] ml-[4px] bg-[#b8c0c4]" />
      </div>
      <Plus size={15} strokeWidth={1.1} color="#444" className="ml-[42px] mt-[8px]" />
      <div className="ml-[101px] mt-[9px] flex flex-col gap-[3px]">
        <div className="w-[2px] h-[2px] bg-[#333]" />
        <div className="w-[2px] h-[2px] bg-[#333]" />
        <div className="w-[2px] h-[2px] bg-[#333]" />
      </div>
      <div className="ml-[14px] mt-[6px] w-[838px] h-[17px] rounded-full bg-[#f3f3f3] flex items-center">
        <div className="ml-[5px] w-0 h-0 border-y-[5px] border-r-[5px] border-y-transparent border-r-[#666]" />
        <div className="ml-[7px] w-[141px] h-[9px] rounded-full bg-[#707070]" />
        <div className="ml-auto mr-[4px] w-0 h-0 border-y-[5px] border-l-[5px] border-y-transparent border-l-[#666]" />
      </div>
    </div>

    {/* status bar */}
    <div className="h-[21px] shrink-0 bg-[#f3f3f3] flex items-center text-[11px] text-[#444]">
      <span className="ml-[12px] w-[50px]">Ready</span>
      <Ico w={15} h={15}>
        <circle cx="7" cy="2.500" r="2" stroke="#444" />
        <path d="M1 5l4 1.500h4L13 5M5 7v3l-2 4M9 7v3l2 4M5 10h4" stroke="#444" />
      </Ico>
      <span className="ml-[3px]">Accessibility: Investigate</span>
      <div className="ml-auto flex items-center h-full">
        <Ico w={14} h={15}>
          <path d="M3 11H.5V.5h12V7" stroke="#444" />
          <circle cx="9" cy="10.500" r="3.500" stroke="#444" />
          <path d="M9 7v7M5.500 10.500h7" stroke="#444" />
        </Ico>
        <span className="ml-[4px] w-[98px]">Display Settings</span>
        <div className="w-[40px] h-full bg-[#e1e1e1] flex items-center justify-center">
          <Ico w={14} h={14}><path d="M.5.5h13v13H.5zM.5 5h13M.5 9.500h13M5 .5v13M9.500 .5v13" stroke="#333" /></Ico>
        </div>
        <div className="w-[40px] flex justify-center">
          <Ico w={12} h={14}><path d="M.5.5h11v13H.5zM3 3.500h6M3 6.500h6M3 9.500h6" stroke="#333" /></Ico>
        </div>
        <div className="w-[40px] flex justify-center">
          <Ico w={14} h={14}><path d="M.5.5h13v13H.5zM.5 9h13M7 .5V9" stroke="#333" /></Ico>
        </div>
        <Minus size={9} strokeWidth={1.5} className="ml-[5px]" />
        <div className="ml-[5px] relative w-[100px] h-px bg-[#555]">
          <div className="absolute left-[49px] -top-[6px] w-[4px] h-[13px] bg-[#555]" />
        </div>
        <Plus size={10} strokeWidth={1.3} className="ml-[4px]" />
        <span className="ml-[11px] mr-[8px] w-[26px]">100%</span>
      </div>
    </div>
  </div>
);

export default App;
